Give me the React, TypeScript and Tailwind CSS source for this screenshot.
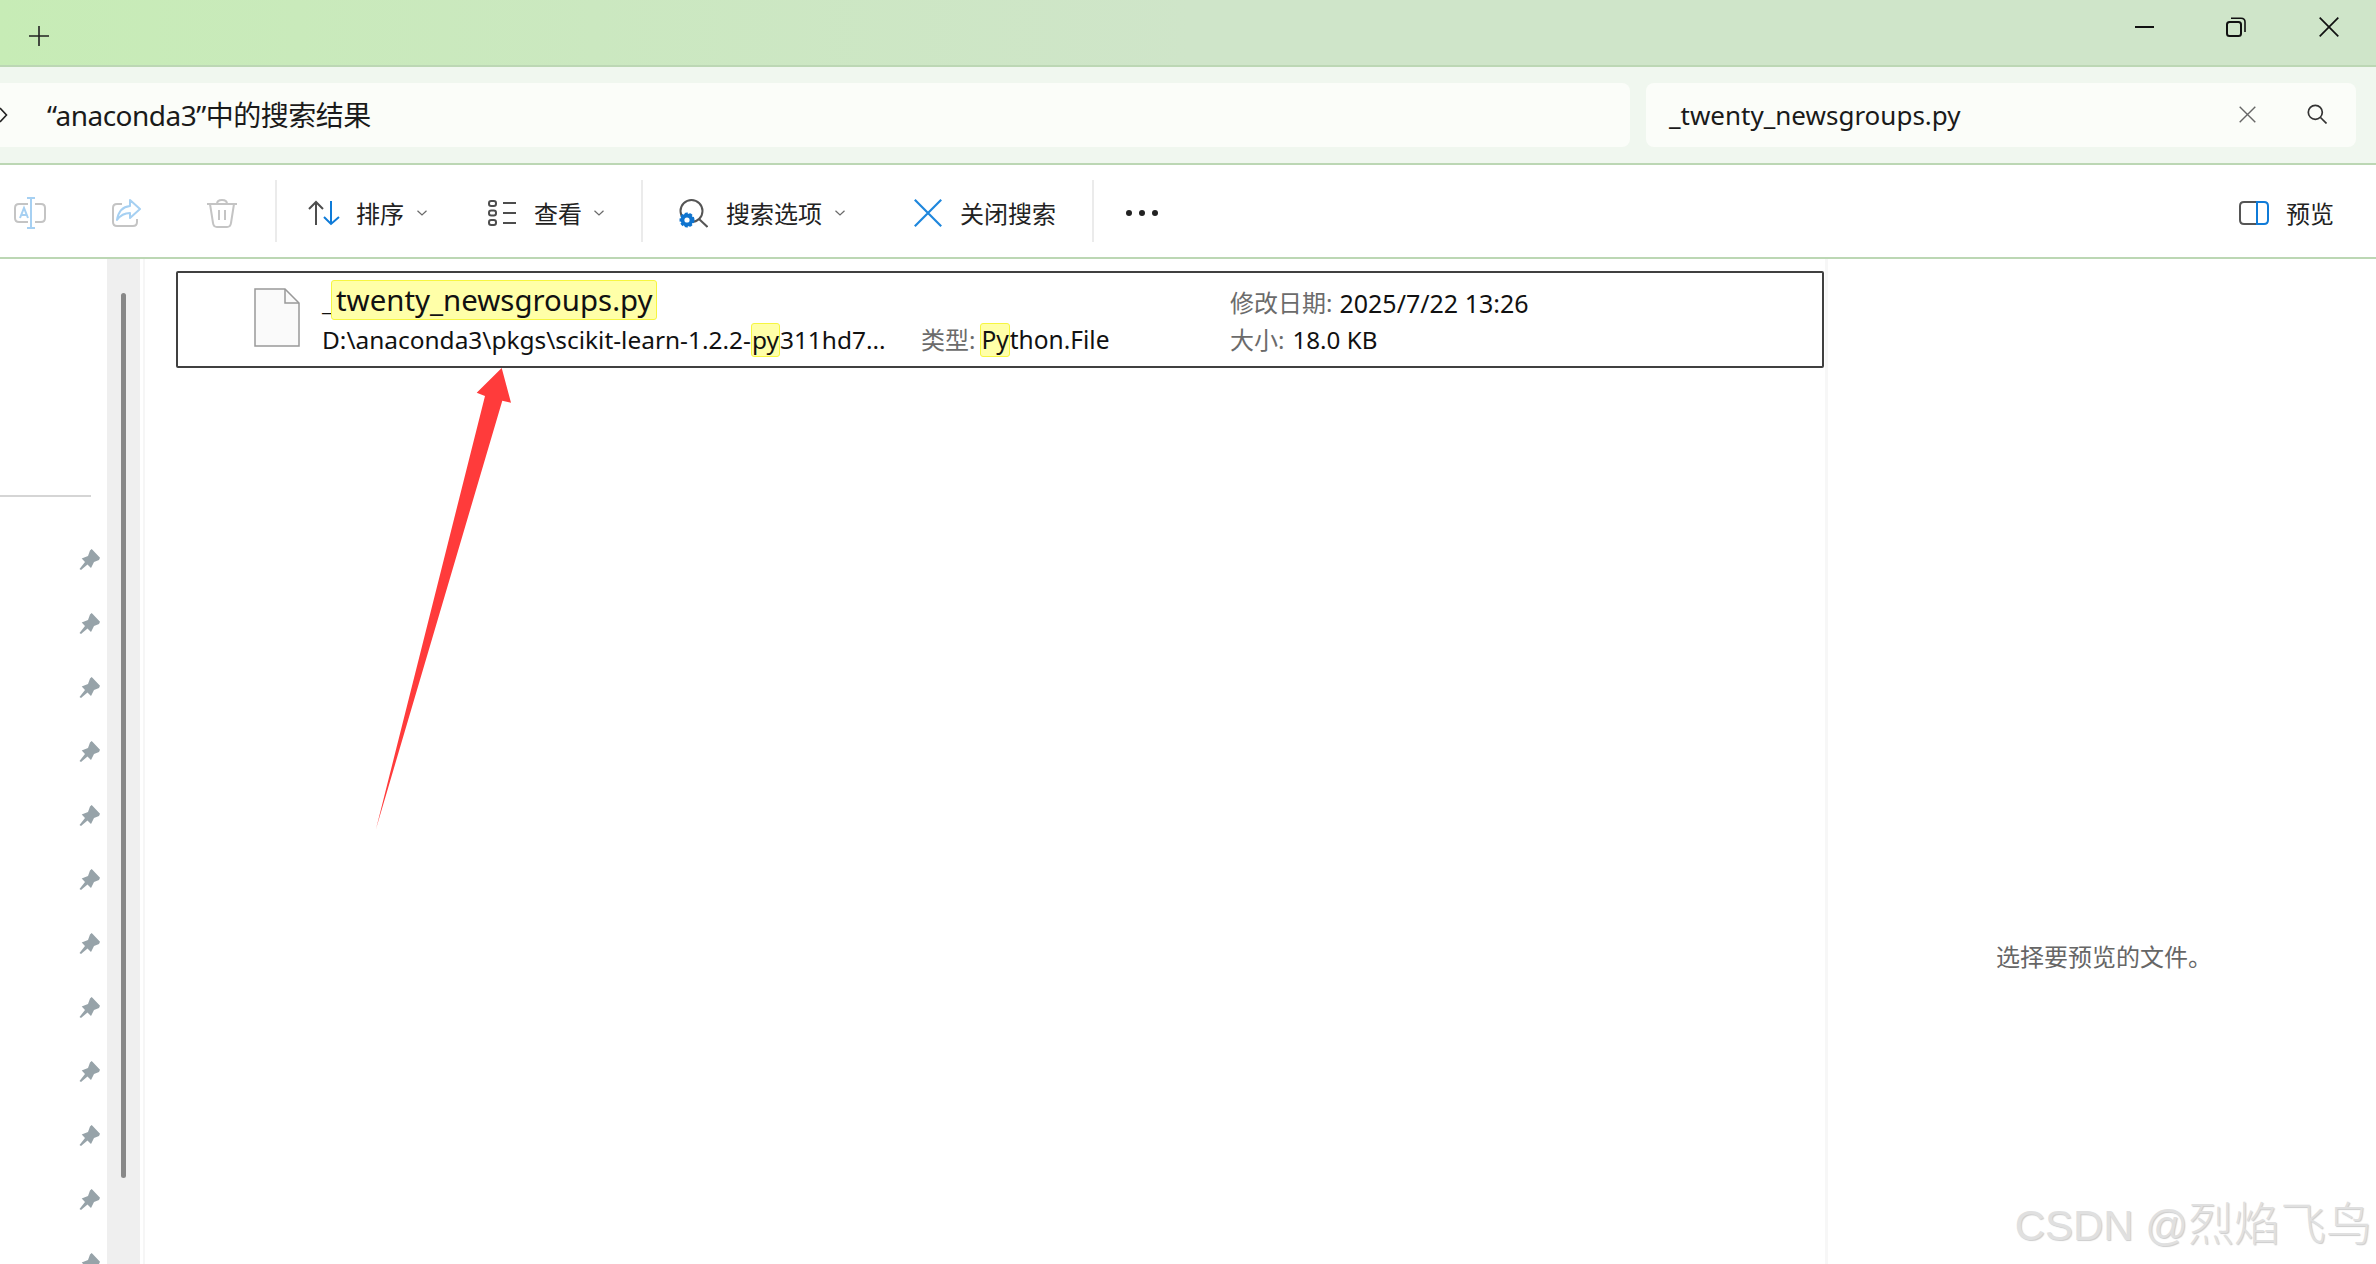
import React from "react";

const Chev = ({ cls }: { cls: string }) => (
  <svg className={cls} width="10" height="6" viewBox="0 0 10 6" fill="none" stroke="#6a6a6a" strokeWidth="1.2">
    <path d="M0.5 0.7 L5 5 L9.5 0.7" />
  </svg>
);

const Pin = () => (
  <svg width="21" height="21" viewBox="0 0 21 21" fill="#97a3a9" className="block shrink-0">
    <path d="M12.7 0 L21 8.7 L20 11 L15 13 L12 19 L8.5 15.5 L2 21 L0.5 20 L6 13 L2.7 9.5 L9 7 L11 1.5 Z" />
  </svg>
);

const Sep = ({ cls }: { cls: string }) => <div className={`w-[2px] h-[62px] -mt-[4px] bg-[#ebebeb] shrink-0 ${cls}`} />;

const Hl = ({ children, cls }: { children: React.ReactNode; cls: string }) => (
  <span className={`inline-block bg-[#ffffa8] border border-[#f6f640] rounded-[3px] ${cls}`}>{children}</span>
);

const pins = [0, 1, 2, 3, 4, 5, 6, 7, 8, 9, 10, 11];

export default function App() {
  return (
    <div className="relative w-[2376px] h-[1264px] overflow-hidden bg-white flex flex-col text-[#1a1a1a] font-['Noto_Sans','Noto_Sans_CJK_SC',sans-serif]">
      {/* title bar */}
      <div className="h-[67px] shrink-0 flex items-center border-b-2 border-[#bcd7b4] bg-[linear-gradient(90deg,#c7ecb6_0%,#cbe8c0_25%,#cfe5c9_50%,#cfe5c9_100%)]">
        <svg className="ml-[29px] mt-[6px]" width="20" height="20" viewBox="0 0 20 20" stroke="#222" strokeWidth="1.6">
          <path d="M10 0 V20 M0 10 H20" />
        </svg>
        <svg className="ml-auto mb-[12px]" width="19" height="2" viewBox="0 0 19 2"><rect width="19" height="2" fill="#111" /></svg>
        <svg className="ml-[72px] mb-[12px]" width="20" height="20" viewBox="0 0 20 20" fill="none" stroke="#111" strokeWidth="2">
          <rect x="1" y="5" width="14" height="14" rx="2.5" />
          <path d="M5 1.2 H15 Q19 1.2 19 5 V15" strokeWidth="1.6" />
        </svg>
        <svg className="ml-[73px] mr-[37px] mb-[12px]" width="20" height="20" viewBox="0 0 20 20" stroke="#111" strokeWidth="1.7">
          <path d="M0.7 0.7 L19.3 19.3 M19.3 0.7 L0.7 19.3" />
        </svg>
      </div>

      {/* address strip */}
      <div className="h-[98px] shrink-0 flex items-start pt-[16px] bg-[#f0f7ef] border-b-2 border-[#bcd7b4]">
        <div className="w-[1630px] h-[64px] rounded-r-[8px] bg-[#fbfdf9] flex items-center">
          <svg className="shrink-0" width="8" height="16" viewBox="0 0 8 16" fill="none" stroke="#222" strokeWidth="1.6">
            <path d="M0 1 L6.5 8 L0 15" />
          </svg>
          <span className="ml-[39px] text-[28px] tracking-[-0.5px] leading-none">“anaconda3”中的搜索结果</span>
        </div>
        <div className="ml-[16px] w-[710px] h-[64px] rounded-[8px] bg-[#fbfdf9] flex items-center">
          <span className="ml-[23px] text-[26px] leading-none">_twenty_newsgroups.py</span>
          <svg className="ml-auto mb-[2px]" width="17" height="17" viewBox="0 0 17 17" stroke="#666" strokeWidth="1.4">
            <path d="M0.7 0.7 L16.3 16.3 M16.3 0.7 L0.7 16.3" />
          </svg>
          <svg className="ml-[51px] mr-[29px] mb-[2px]" width="20" height="20" viewBox="0 0 20 20" fill="none" stroke="#333" strokeWidth="1.7">
            <circle cx="8.3" cy="8.3" r="7" />
            <path d="M13.5 13.5 L19.5 19.5" />
          </svg>
        </div>
      </div>

      {/* toolbar */}
      <div className="h-[94px] shrink-0 flex items-center pt-[4px] border-b-2 border-[#bcd7b4] text-[24px] leading-none text-[#222]">
        <svg className="ml-[14px] shrink-0" width="32" height="32" viewBox="0 0 32 32" fill="none" strokeWidth="2">
          <path d="M14 7 H5 Q1 7 1 11 V21 Q1 25 5 25 H14 M21 7 H27 Q31 7 31 11 V21 Q31 25 27 25 H21" stroke="#c4c4c4" />
          <path d="M13 1 H21 M13 31 H21 M17 1 V31" stroke="#a6d0f2" />
          <path d="M6 21 L10 11 L14 21 M7.5 18 H12.5" stroke="#a6d0f2" />
        </svg>
        <svg className="ml-[66px] shrink-0" width="29" height="28" viewBox="0 0 29 28" fill="none" strokeWidth="2">
          <path d="M10 5 H5 Q1 5 1 9 V23 Q1 27 5 27 H21 Q25 27 25 23 V20" stroke="#c4c4c4" />
          <path d="M18 1 L28 10 L18 19 V14 Q10 14 5 21 Q7 8 18 7 Z" stroke="#a6d0f2" strokeLinejoin="round" />
        </svg>
        <svg className="ml-[66px] shrink-0" width="30" height="29" viewBox="0 0 30 29" fill="none" stroke="#c4c4c4" strokeWidth="2">
          <path d="M0 5 H30 M10 5 Q10 1 15 1 Q20 1 20 5 M3 5 L6 24 Q6.5 28 10 28 H20 Q23.5 28 24 24 L27 5 M12 11 V21 M18 11 V21" />
        </svg>
        <Sep cls="ml-[38px]" />
        <svg className="ml-[31px] shrink-0" width="32" height="26" viewBox="0 0 32 26" fill="none" strokeWidth="2">
          <path d="M8 25 V2 M1 9 L8 2 L15 9" stroke="#4d4d4d" />
          <path d="M23 1 V24 M16 17 L23 24 L31 17" stroke="#0f7bd8" />
        </svg>
        <span className="ml-[16px] w-[48px] shrink-0 mt-[2px]">排序</span>
        <Chev cls="ml-[13px] shrink-0" />
        <svg className="ml-[61px] shrink-0" width="28" height="26" viewBox="0 0 28 26" fill="none" stroke="#4d4d4d" strokeWidth="2">
          <rect x="1" y="1" width="7" height="5" rx="2.2" />
          <rect x="1" y="10.5" width="7" height="5" rx="2.2" />
          <rect x="1" y="20" width="7" height="5" rx="2.2" />
          <path d="M15 3 H28 M15 13 H28 M15 23 H28" />
        </svg>
        <span className="ml-[18px] w-[48px] shrink-0 mt-[2px]">查看</span>
        <Chev cls="ml-[12px] shrink-0" />
        <Sep cls="ml-[37px]" />
        <svg className="ml-[35px] shrink-0" width="30" height="29" viewBox="0 0 30 29" fill="none">
          <circle cx="13.5" cy="12" r="11" stroke="#555" strokeWidth="2" />
          <path d="M21 20 L29.5 28" stroke="#555" strokeWidth="2" />
          <circle cx="9" cy="21" r="6.5" fill="#0f74cf" stroke="#0f74cf" strokeWidth="2" strokeDasharray="3 1.6" />
          <circle cx="9" cy="21" r="2.6" fill="#ffffff" />
        </svg>
        <span className="ml-[18px] w-[96px] shrink-0 mt-[2px]">搜索选项</span>
        <Chev cls="ml-[13px] shrink-0" />
        <svg className="ml-[69px] shrink-0" width="28" height="28" viewBox="0 0 28 28" stroke="#1f87dd" strokeWidth="2.2">
          <path d="M0.8 0.8 L27.2 27.2 M27.2 0.8 L0.8 27.2" />
        </svg>
        <span className="ml-[18px] w-[96px] shrink-0 mt-[2px]">关闭搜索</span>
        <Sep cls="ml-[36px]" />
        <svg className="ml-[32px] shrink-0" width="32" height="6" viewBox="0 0 32 6" fill="#222">
          <circle cx="3" cy="3" r="3" />
          <circle cx="16" cy="3" r="3" />
          <circle cx="29" cy="3" r="3" />
        </svg>
        <svg className="ml-auto shrink-0" width="30" height="24" viewBox="0 0 30 24" fill="none" strokeWidth="2">
          <path d="M18 1 H5 Q1 1 1 5 V19 Q1 23 5 23 H18" stroke="#555" />
          <path d="M18 0 V24 M18 1 H25 Q29 1 29 5 V19 Q29 23 25 23 H18" stroke="#0f7bd8" />
        </svg>
        <span className="ml-[17px] mr-[42px] shrink-0 mt-[2px]">预览</span>
      </div>

      {/* body */}
      <div className="flex-1 flex min-h-0">
        <aside className="w-[107px] shrink-0 overflow-hidden">
          <div className="mt-[236px] w-[91px] h-[2px] bg-[#d5d5d5]" />
          <div className="mt-[52px] pl-[79px] flex flex-col gap-[43px]">
            {pins.map((p) => (
              <Pin key={p} />
            ))}
          </div>
        </aside>
        <div className="w-[33px] shrink-0 bg-[#efefef] pl-[14px] pt-[34px]">
          <div className="w-[5px] h-[885px] rounded-full bg-[#888888]" />
        </div>
        <div className="w-[3px] shrink-0" />
        <div className="w-[2px] shrink-0 bg-[#f6f6f6]" />
        <main className="w-[1680px] shrink-0 pl-[31px] pt-[12px]">
          <div className="w-[1648px] h-[97px] border-2 border-[#404040] rounded-[2px] grid grid-cols-[144px_599px_309px_1fr] grid-rows-[48px_34px] pt-[2px] text-[#111] leading-none">
            <div className="row-span-2 pl-[76px] pt-[13px]">
              <svg width="46" height="59" viewBox="0 0 46 59" fill="#fafafa" stroke="#999" strokeWidth="1.5" className="block">
                <path d="M1 1 H31 L45 15 V58 H1 Z" />
                <path d="M31 1 V15 H45" fill="none" />
              </svg>
            </div>
            <div className="text-[29.4px] flex items-baseline pt-[5px] whitespace-nowrap">
              <span className="text-[22px] w-[9px] shrink-0">_</span>
              <Hl cls="leading-[38px] pl-[4px] pr-[3px]">twenty_newsgroups.py</Hl>
            </div>
            <div className="row-start-2 col-start-2 flex items-center whitespace-nowrap text-[24.45px]">
              <span>D:\anaconda3\pkgs\scikit-learn-1.2.2-</span>
              <Hl cls="leading-[32px]">py</Hl>
              <span>311hd7...</span>
            </div>
            <div className="row-start-2 col-start-3 flex items-center whitespace-nowrap text-[24.5px]">
              <span className="text-[#6b6b6b] text-[24px]">类型:</span>
              <Hl cls="ml-[5px] leading-[32px]">Py</Hl>
              <span>thon.File</span>
            </div>
            <div className="row-start-1 col-start-4 flex items-center whitespace-nowrap text-[25px] pt-[8px]">
              <span className="text-[#6b6b6b] text-[24px]">修改日期:</span>
              <span className="ml-[7px]">2025/7/22 13:26</span>
            </div>
            <div className="row-start-2 col-start-4 flex items-center whitespace-nowrap text-[24.2px]">
              <span className="text-[#6b6b6b] text-[24px]">大小:</span>
              <span className="ml-[8px]">18.0 KB</span>
            </div>
          </div>
        </main>
        <div className="w-[3px] shrink-0 bg-[#f7f7f7]" />
        <section className="flex-1 pl-[168px] pt-[686px]">
          <span className="text-[24px] leading-none text-[#666] whitespace-nowrap">选择要预览的文件。</span>
        </section>
      </div>

      {/* arrow annotation */}
      <svg className="absolute left-0 top-0 pointer-events-none" width="2376" height="1264" viewBox="0 0 2376 1264">
        <polygon points="501.7,368 511,402.7 502.3,400.7 376,829 485,396 476.7,392.7" fill="#ff3b3b" />
      </svg>

      {/* watermark */}
      <div className="absolute right-[4px] bottom-[17px] flex items-baseline leading-none text-[#e0e0e0] whitespace-nowrap font-['Liberation_Sans','Noto_Sans_CJK_SC',sans-serif] [text-shadow:1px_1px_1px_#cccccc]">
        <span className="text-[42px]">CSDN @</span>
        <span className="text-[46px] font-light">烈焰飞鸟</span>
      </div>
    </div>
  );
}
